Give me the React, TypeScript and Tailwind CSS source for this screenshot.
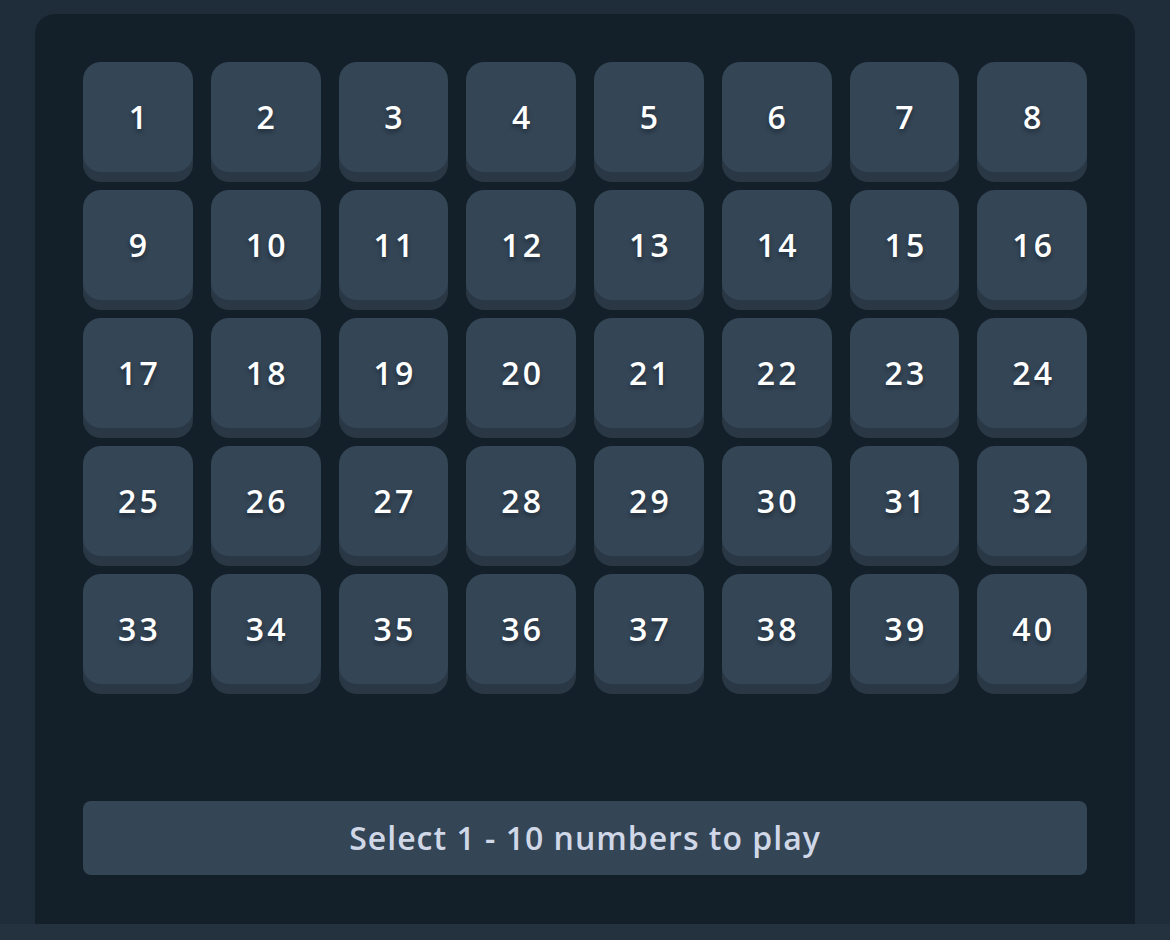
const numbers = Array.from({ length: 40 }, (_, i) => i + 1);

function Tile({ n }: { n: number }) {
  return (
    <button
      type="button"
      className="flex h-[110px] items-center justify-center rounded-[18px] bg-[#344555] pl-[3px] text-[32px] font-semibold tracking-[3px] text-white shadow-[0_10px_0_#2a3846] [text-shadow:0_3px_4px_rgba(10,18,26,0.45)]"
    >
      {n}
    </button>
  );
}

export default function App() {
  return (
    <div className="min-h-[940px] bg-[#1f2d3a] px-[35px] pt-[14px] font-['Open_Sans','Noto_Sans',sans-serif]">
      <div className="w-[1100px] rounded-t-[20px] bg-[#142029] px-12 pb-[49px] pt-12">
        <div className="grid grid-cols-8 gap-x-[18px] gap-y-[18px]">
          {numbers.map((n) => (
            <Tile key={n} n={n} />
          ))}
        </div>
        <button
          type="button"
          className="mt-[117px] flex h-[74px] w-full items-center justify-center rounded-lg bg-[#344555] text-[32px] font-semibold tracking-[1px] text-[#d0d8e8]"
        >
          Select 1 - 10 numbers to play
        </button>
      </div>
      <div className="-mx-[35px] h-[17px] bg-[#243240]" />
    </div>
  );
}
